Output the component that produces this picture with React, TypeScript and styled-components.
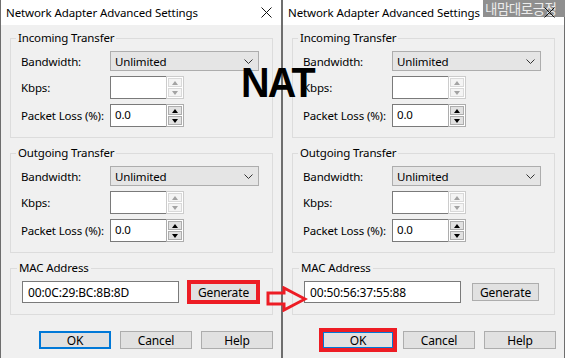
import styled, { createGlobalStyle } from "styled-components";

const GlobalStyle = createGlobalStyle`
  html, body {
    margin: 0;
    padding: 0;
    background: #f0f0f0;
  }
  body {
    font-family: "Noto Sans", "Open Sans", sans-serif;
    font-size: 11.5px;
    letter-spacing: -0.15px;
    color: #000;
  }
`;

type DialogProps = {
  width: number;
  mac: string;
  highlightGenerate?: boolean;
  highlightOk?: boolean;
};

function Spin({ enabled }: { enabled: boolean }) {
  return (
    <SpinBox>
      <SpinText>{enabled ? "0.0" : ""}</SpinText>
      <SpinButtons $enabled={enabled}>
        <SpinButton $enabled={enabled} $up />
        <SpinButton $enabled={enabled} />
      </SpinButtons>
    </SpinBox>
  );
}

function TransferGroup({ title }: { title: string }) {
  return (
    <Group>
      <Legend>{title}</Legend>
      <Rows>
        <Row>
          <Label>Bandwidth:</Label>
          <Select>
            Unlimited
            <Chevron viewBox="0 0 9 5" width="9" height="5">
              <polyline points="0.5,0.5 4.5,4.5 8.5,0.5" fill="none" stroke="#333" strokeWidth="1" />
            </Chevron>
          </Select>
        </Row>
        <Row>
          <Label>Kbps:</Label>
          <Spin enabled={false} />
        </Row>
        <Row>
          <Label>Packet Loss (%):</Label>
          <Spin enabled />
        </Row>
      </Rows>
    </Group>
  );
}

function Dialog({ width, mac, highlightGenerate, highlightOk }: DialogProps) {
  return (
    <Window style={{ width }}>
      <TitleBar>
        <Title>Network Adapter Advanced Settings</Title>
        <CloseIcon viewBox="0 0 11 11" width="11" height="11">
          <line x1="0.5" y1="0.5" x2="10.5" y2="10.5" stroke="#111" strokeWidth="1" />
          <line x1="10.5" y1="0.5" x2="0.5" y2="10.5" stroke="#111" strokeWidth="1" />
        </CloseIcon>
      </TitleBar>
      <Body>
        <TransferGroup title="Incoming Transfer" />
        <TransferGroup title="Outgoing Transfer" />
        <MacGroup>
          <Legend>MAC Address</Legend>
          <MacRow>
            <MacInput>{mac}</MacInput>
            <PushButton $width={67} $height={18} $highlight={highlightGenerate}>
              Generate
            </PushButton>
          </MacRow>
        </MacGroup>
        <ButtonRow>
          <PushButton $default $highlight={highlightOk}>OK</PushButton>
          <PushButton>Cancel</PushButton>
          <PushButton>Help</PushButton>
        </ButtonRow>
      </Body>
    </Window>
  );
}

export default function App() {
  return (
    <>
      <GlobalStyle />
      <Screen>
        <Dialog width={282} mac="00:0C:29:BC:8B:8D" highlightGenerate />
        <Dialog width={283} mac="00:50:56:37:55:88" highlightOk />

        <NatLabel>NAT</NatLabel>
        <Arrow viewBox="0 0 42 26" width="42" height="26">
          <polygon
            points="2,7 18,7 18,2 39,13 18,24 18,18 2,18"
            fill="none"
            stroke="#ed1c24"
            strokeWidth="3"
          />
        </Arrow>
        <Watermark>내맘대로긍정</Watermark>
      </Screen>
    </>
  );
}

const Screen = styled.div`
  position: relative;
  display: flex;
  width: 565px;
  height: 358px;
  overflow: hidden;
`;

const Window = styled.div`
  box-sizing: border-box;
  height: 358px;
  display: flex;
  flex-direction: column;
  background: #f0f0f0;
  border-left: 1px solid #6e6e6e;
  border-right: 1px solid #6e6e6e;
  flex-shrink: 0;
`;

const TitleBar = styled.div`
  height: 25px;
  display: flex;
  align-items: center;
  justify-content: space-between;
  background: #fff;
  padding: 0 9px 0 5px;
`;

const Title = styled.span`
  font-size: 11.5px;
  letter-spacing: -0.1px;
  white-space: nowrap;
`;

const CloseIcon = styled.svg`
  position: relative;
  z-index: 3;
  display: block;
`;

const Body = styled.div`
  display: flex;
  flex-direction: column;
  padding: 5px 0 0 9px;
`;

const Group = styled.fieldset`
  box-sizing: border-box;
  width: 263px;
  margin: 0 0 7px 0;
  padding: 5px 10px 10px 10px;
  border: 1px solid #dcdcdc;
  min-inline-size: 0;
`;

const MacGroup = styled(Group)`
  padding: 5px 10px 11px 11px;
  margin-bottom: 16px;
`;

const Legend = styled.legend`
  padding: 0 2px;
  margin-left: -5px;
  line-height: 16px;
  font-size: 11.5px;
`;

const Rows = styled.div`
  display: flex;
  flex-direction: column;
  gap: 5px;
`;

const Row = styled.div`
  display: flex;
  align-items: center;
`;

const Label = styled.span`
  width: 89px;
  flex-shrink: 0;
  white-space: nowrap;
`;

const Select = styled.div`
  box-sizing: border-box;
  width: 149px;
  height: 20px;
  display: flex;
  align-items: center;
  justify-content: space-between;
  padding: 0 5px 0 4px;
  background: #e5e5e5;
  border: 1px solid #adadad;
`;

const Chevron = styled.svg`
  display: block;
`;

const SpinBox = styled.div`
  display: flex;
  height: 23px;
`;

const SpinText = styled.div`
  box-sizing: border-box;
  width: 56px;
  height: 23px;
  padding: 2px 0 0 4px;
  background: #fff;
  border: 1px solid #7a7a7a;
  border-right: none;
`;

const SpinButtons = styled.div<{ $enabled: boolean }>`
  box-sizing: border-box;
  width: 18px;
  height: 23px;
  display: flex;
  flex-direction: column;
  gap: 1px;
  padding: 1px;
  background: #fff;
  border: 1px solid ${(p) => (p.$enabled ? "#adadad" : "#cccccc")};
`;

const SpinButton = styled.div<{ $enabled: boolean; $up?: boolean }>`
  box-sizing: border-box;
  flex: 1;
  display: flex;
  align-items: center;
  justify-content: center;
  background: ${(p) => (p.$enabled ? "#e1e1e1" : "#f4f4f4")};
  border: 1px solid ${(p) => (p.$enabled ? "#adadad" : "#d9d9d9")};

  &::after {
    content: "";
    width: 0;
    height: 0;
    border-left: 3.5px solid transparent;
    border-right: 3.5px solid transparent;
    ${(p) => (p.$up ? "border-bottom" : "border-top")}: 4px solid
      ${(p) => (p.$enabled ? "#000" : "#a3a3a3")};
  }
`;

const MacRow = styled.div`
  display: flex;
  align-items: center;
  gap: 11px;
`;

const MacInput = styled.div`
  box-sizing: border-box;
  width: 157px;
  height: 22px;
  padding: 2px 0 0 5px;
  background: #fff;
  border: 1px solid #7a7a7a;
  font-size: 12px;
`;

const ButtonRow = styled.div`
  display: flex;
  justify-content: flex-end;
  gap: 9px;
  padding-right: 8px;
`;

const PushButton = styled.div<{
  $width?: number;
  $height?: number;
  $default?: boolean;
  $highlight?: boolean;
}>`
  box-sizing: border-box;
  width: ${(p) => p.$width ?? 72}px;
  height: ${(p) => p.$height ?? 18}px;
  display: flex;
  align-items: center;
  justify-content: center;
  background: #e1e1e1;
  border: ${(p) => (p.$default ? "2px solid #0078d7" : "1px solid #adadad")};
  font-size: 12px;
  outline: ${(p) => (p.$highlight ? "4px solid #ed1c24" : "none")};
  outline-offset: -1px;
`;

const NatLabel = styled.div`
  position: absolute;
  left: 241px;
  top: 61px;
  z-index: 4;
  font-family: "Liberation Sans", Arial, sans-serif;
  font-weight: bold;
  font-size: 43px;
  line-height: 1;
  letter-spacing: -2px;
  transform: scaleX(0.92);
  transform-origin: left top;
`;

const Arrow = styled.svg`
  position: absolute;
  left: 266px;
  top: 286px;
  z-index: 4;
`;

const Watermark = styled.div`
  position: absolute;
  top: 0;
  right: 0;
  z-index: 2;
  box-sizing: border-box;
  width: 82px;
  height: 17px;
  padding-left: 2px;
  background: #8f8f8f;
  color: #ececec;
  font-family: "Noto Sans CJK KR", sans-serif;
  font-size: 13.5px;
  line-height: 17px;
  letter-spacing: -0.5px;
  white-space: nowrap;
`;
